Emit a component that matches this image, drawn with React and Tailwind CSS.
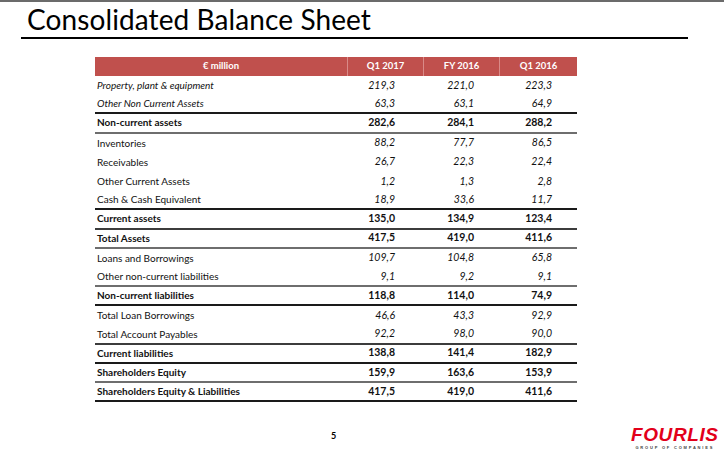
import React from 'react';

const rows = [
  { label: 'Property, plant & equipment', v: ['219,3', '221,0', '223,3'], italicLabel: true },
  { label: 'Other Non Current Assets', v: ['63,3', '63,1', '64,9'], italicLabel: true, line: 'black' },
  { label: 'Non-current assets', v: ['282,6', '284,1', '288,2'], bold: true, line: 'gray' },
  { label: 'Inventories', v: ['88,2', '77,7', '86,5'] },
  { label: 'Receivables', v: ['26,7', '22,3', '22,4'] },
  { label: 'Other Current Assets', v: ['1,2', '1,3', '2,8'] },
  { label: 'Cash & Cash Equivalent', v: ['18,9', '33,6', '11,7'], line: 'black' },
  { label: 'Current assets', v: ['135,0', '134,9', '123,4'], bold: true, line: 'dark' },
  { label: 'Total Assets', v: ['417,5', '419,0', '411,6'], bold: true, line: 'gray' },
  { label: 'Loans and Borrowings', v: ['109,7', '104,8', '65,8'] },
  { label: 'Other non-current liabilities', v: ['9,1', '9,2', '9,1'], line: 'gray' },
  { label: 'Non-current liabilities', v: ['118,8', '114,0', '74,9'], bold: true, line: 'black' },
  { label: 'Total Loan Borrowings', v: ['46,6', '43,3', '92,9'] },
  { label: 'Total Account Payables', v: ['92,2', '98,0', '90,0'], line: 'dark' },
  { label: 'Current liabilities', v: ['138,8', '141,4', '182,9'], bold: true, line: 'black' },
  { label: 'Shareholders Equity', v: ['159,9', '163,6', '153,9'], bold: true, line: 'gray' },
  { label: 'Shareholders Equity & Liabilities', v: ['417,5', '419,0', '411,6'], bold: true, line: 'black' },
];

const lineClass = {
  black: 'border-b-2 border-[#1a1a1a]',
  dark: 'border-b-2 border-[#3c3c3c]',
  gray: 'border-b-2 border-[#6e6e6e]',
};

const valuePad = ['pr-[29px]', 'pr-[26px]', 'pr-[25px]'];

function Row({ row }) {
  const border = row.line ? lineClass[row.line] : '';
  return (
    <div className={`grid grid-cols-[253px_76px_76px_77px] h-[19.2px] items-center text-[10px] text-[#111] ${border}`}>
      <div className={`pl-[2px] ${row.bold ? 'font-bold' : ''} ${row.italicLabel ? 'italic' : ''}`}>{row.label}</div>
      {row.v.map((val, i) => (
        <div key={i} className={`text-right ${valuePad[i]} ${row.bold ? 'font-bold' : 'italic'} text-[10.5px]`}>
          {val}
        </div>
      ))}
    </div>
  );
}

export default function App() {
  return (
    <div className="w-[724px] h-[450px] bg-white border-t-2 border-[#6b6b6b] font-['Lato',sans-serif] text-black overflow-hidden">
      {/* Title */}
      <div className="h-[35px] pl-[27px] flex items-end">
        <h1 className="text-[28px] leading-[35px] font-normal tracking-[0.1px]">Consolidated Balance Sheet</h1>
      </div>
      <div className="ml-[21px] w-[667px] h-[2px] bg-black" />

      {/* Table */}
      <div className="ml-[95px] w-[482px] mt-[18px]">
        <div className="grid grid-cols-[253px_76px_76px_77px] h-[19px] bg-[#c0504d] text-white text-[9.5px] font-bold">
          <div className="flex items-center justify-center border-r border-[#d98a88]">€ million</div>
          <div className="flex items-center justify-center border-r border-[#d98a88]">Q1 2017</div>
          <div className="flex items-center justify-center border-r border-[#d98a88]">FY 2016</div>
          <div className="flex items-center justify-center">Q1 2016</div>
        </div>
        {rows.map((r) => (
          <Row key={r.label} row={r} />
        ))}
      </div>

      {/* Footer */}
      <div className="flex items-start mt-[24px]">
        <div className="ml-[331px] w-[10px] text-[9px] font-bold pt-[3px]">5</div>
        <div className="ml-[290px] flex flex-col items-center">
          <div className="font-['Liberation_Sans',sans-serif] italic font-bold text-[19px] leading-[18px] text-[#e2001a] tracking-[0.6px]">
            FOURLIS
          </div>
          <div className="font-['Liberation_Sans',sans-serif] text-[4px] leading-[5px] font-bold text-[#444] tracking-[1.8px] whitespace-nowrap mt-[1px]">
            GROUP OF COMPANIES
          </div>
        </div>
      </div>
    </div>
  );
}
